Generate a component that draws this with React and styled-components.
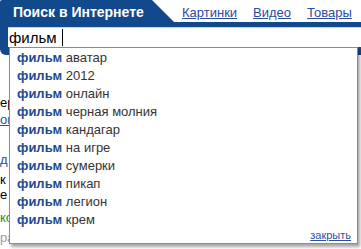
import React from "react";
import styled, { createGlobalStyle } from "styled-components";

const Global = createGlobalStyle`
  html, body { margin: 0; padding: 0; background: #fff; overflow: hidden; }
  body { font-family: "Liberation Sans", Arial, sans-serif; }
  * { box-sizing: border-box; }
`;

const BLUE = "#11498c";

const Page = styled.div`
  position: relative;
  width: 361px;
  height: 249px;
  overflow: hidden;
`;

const Header = styled.div`
  display: flex;
  align-items: stretch;
  height: 22px;
`;

const Tab = styled.div`
  width: 174px;
  background: ${BLUE};
  clip-path: polygon(0 0, 152px 0, 174px 100%, 0 100%);
  border-top-left-radius: 2px;
  color: #fff;
  font-weight: bold;
  font-size: 14px;
  padding: 4px 0 0 13px;
  line-height: 16px;
  white-space: nowrap;
`;

const Nav = styled.nav`
  display: flex;
  gap: 16px;
  margin-left: 8px;
  padding-top: 5px;
`;

const NavLink = styled.a`
  font-size: 13px;
  line-height: 15px;
  color: #2a4ca2;
  text-decoration: underline;
`;

const SearchPanel = styled.div`
  background: ${BLUE};
  padding: 5px 0 8px 8px;
  border-bottom-left-radius: 6px;
`;

const InputBox = styled.div`
  height: 20px;
  background: #fff;
  border-top: 1px solid #c4d2e6;
  display: flex;
  align-items: center;
  padding-left: 1px;
  font-size: 15px;
  color: #000;
`;

const Caret = styled.span`
  display: inline-block;
  width: 1px;
  height: 17px;
  background: #000;
  margin-left: 5px;
`;

const Results = styled.div`
  font-size: 13px;
  line-height: 15px;
`;

const Line = styled.div`
  margin-top: ${(p) => p.$gap}px;
  color: ${(p) => p.$color || "#000"};
  text-decoration: ${(p) => (p.$link ? "underline" : "none")};
  white-space: nowrap;
`;

const Dropdown = styled.div`
  position: absolute;
  top: 47px;
  left: 9px;
  width: 349px;
  background: #fff;
  border: 1px solid #8c8c8c;
  box-shadow: 2px 3px 3px rgba(0, 0, 0, 0.35);
  padding-top: 1px;
`;

const Item = styled.div`
  font-size: 13px;
  line-height: 18px;
  padding-left: 7px;
  color: #333;
`;

const Bold = styled.b`
  color: #1d4b8d;
`;

const Footer = styled.div`
  display: flex;
  justify-content: flex-end;
  align-items: flex-end;
  padding: 0 6px 2px 0;
  height: 14px;
`;

const CloseLink = styled.a`
  font-size: 11px;
  line-height: 11px;
  color: #2d4fa3;
  text-decoration: underline;
`;

const items = [
  "аватар",
  "2012",
  "онлайн",
  "черная молния",
  "кандагар",
  "на игре",
  "сумерки",
  "пикап",
  "легион",
  "крем",
];

export default function App() {
  return (
    <Page>
      <Global />
      <Header>
        <Tab>Поиск в Интернете</Tab>
        <Nav>
          <NavLink>Картинки</NavLink>
          <NavLink>Видео</NavLink>
          <NavLink>Товары</NavLink>
        </Nav>
      </Header>
      <SearchPanel>
        <InputBox>
          фильм
          <Caret />
        </InputBox>
      </SearchPanel>
      <Results>
        <Line $gap={40}>ер</Line>
        <Line $gap={2} $color="#1f4ea3" $link>
          он
        </Line>
        <Line $gap={25} $color="#1f4ea3" $link>
          д
        </Line>
        <Line $gap={5}>к</Line>
        <Line $gap={0}>е</Line>
        <Line $gap={8} $color="#2b8a2b">
          ко
        </Line>
        <Line $gap={5} $color="#999">
          ра
        </Line>
      </Results>
      <Dropdown>
        {items.map((t) => (
          <Item key={t}>
            <Bold>фильм</Bold> {t}
          </Item>
        ))}
        <Footer>
          <CloseLink>закрыть</CloseLink>
        </Footer>
      </Dropdown>
    </Page>
  );
}
